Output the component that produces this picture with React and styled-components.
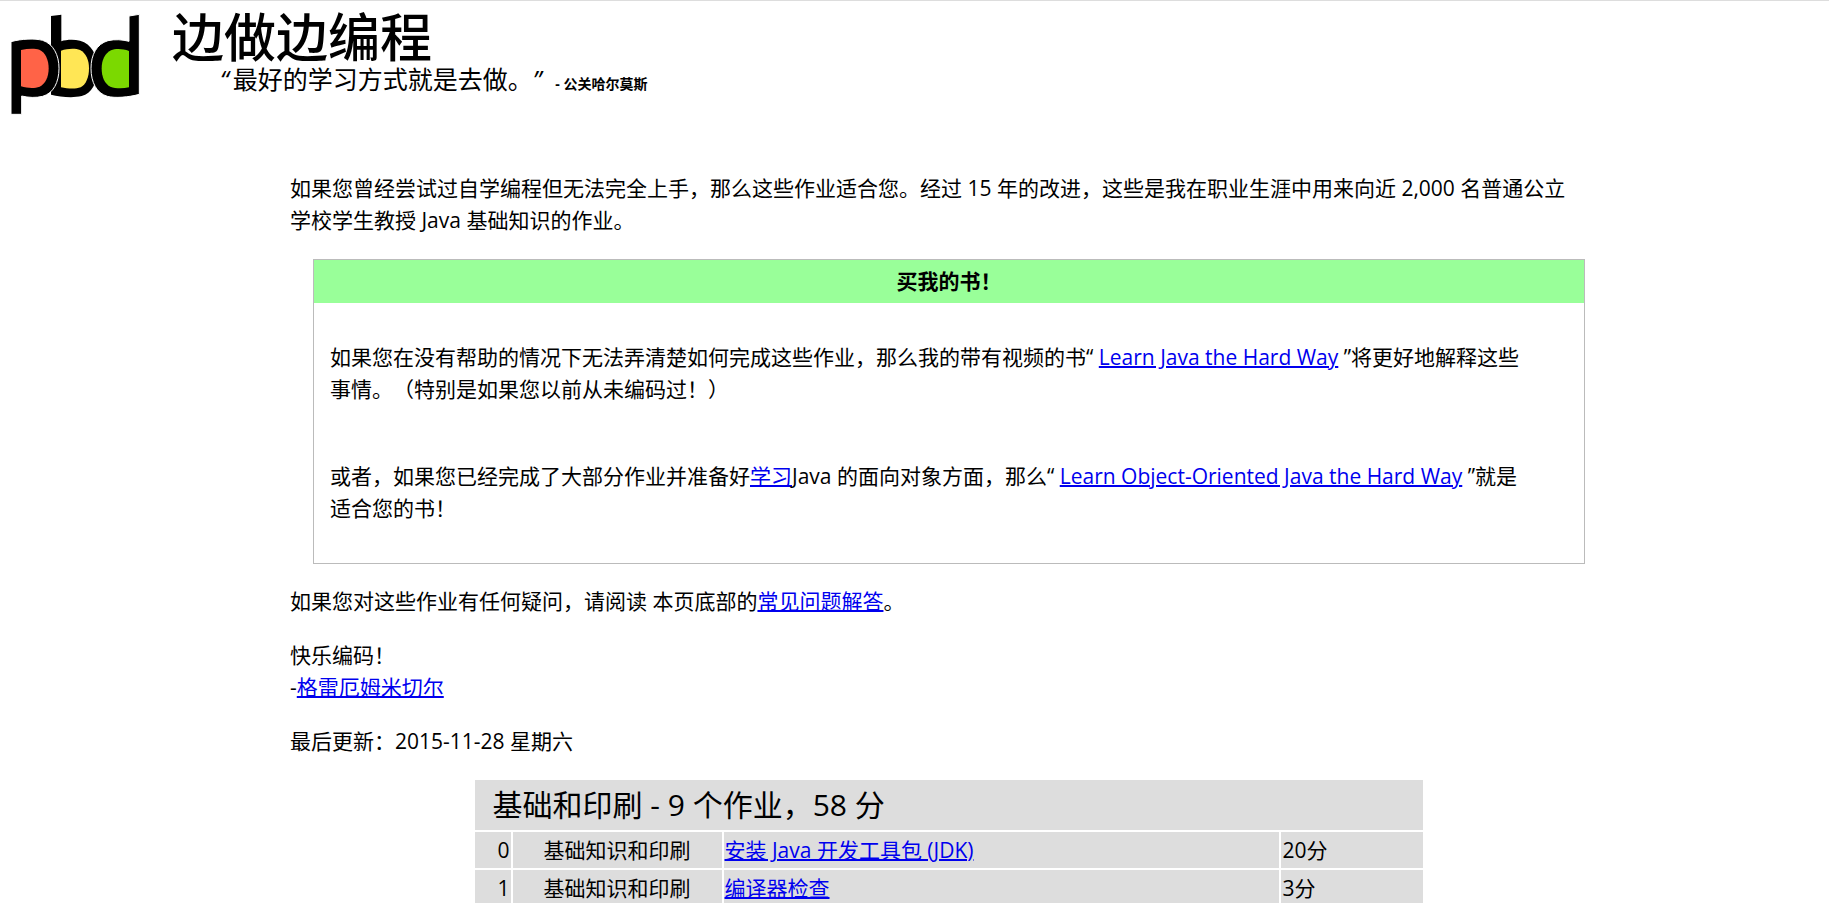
import React from "react";
import styled, { createGlobalStyle } from "styled-components";

const GlobalStyle = createGlobalStyle`
  body {
    margin: 0;
    background: #fff;
    color: #000;
    font-family: "Open Sans", "Noto Sans CJK SC", sans-serif;
    font-size: 21px;
    line-height: 32px;
    text-spacing-trim: space-all;
  }
`;

const Header = styled.header`
  display: flex;
  align-items: flex-start;
  gap: 32px;
  padding: 13px 10px 0;
  border-top: 1px solid #ddd;
`;

const Logo = styled.svg`
  flex: none;
  width: 130px;
  height: 101px;
`;

const Title = styled.h1`
  margin: 0;
  font-size: 52px;
  font-weight: 500;
  line-height: 46px;
`;

const Tagline = styled.p`
  display: flex;
  align-items: baseline;
  gap: 10px;
  margin: 0;
  padding-left: 48px;
  font-size: 25px;
  line-height: 38px;
`;

const Quote = styled.em`
  padding-right: 4px;
`;

const Author = styled.small`
  font-size: 14px;
  font-weight: 700;
`;

const Main = styled.main`
  padding: 57px 221px 0 290px;
`;

const Text = styled.p`
  margin: 0;
  padding-right: 30px;
`;

const Intro = styled(Text)`
  margin-bottom: 23px;
`;

const Notes = styled.div`
  display: flex;
  flex-direction: column;
  gap: 22px;
  margin-bottom: 23px;
`;

const Link = styled.a`
  color: #0000ee;
  text-decoration: underline;
  text-decoration-thickness: 2px;
`;

const BookBox = styled.section`
  margin: 0 23px 21px;
  border: 1px solid #bbb;
`;

const BookTitle = styled.h2`
  margin: 0;
  padding: 5px 16px 6px;
  background: #99ff99;
  font-size: 21px;
  line-height: 32px;
  text-align: center;
`;

const BookBody = styled.div`
  display: flex;
  flex-direction: column;
  gap: 55px;
  padding: 38px 56px 39px 16px;

  p {
    margin: 0;
  }
`;

const Assignments = styled.table`
  width: 72%;
  margin: -2px auto 0;
  border-collapse: separate;
  border-spacing: 0 2px;
  table-layout: fixed;
`;

const Caption = styled.th`
  height: 50px;
  padding: 0 18px;
  background: #ddd;
  font-size: 30px;
  font-weight: 400;
  text-align: left;
`;

const Cell = styled.td`
  height: 36px;
  padding: 0 1px;
  background: #ddd;
  background-clip: padding-box;
  border-right: ${(props) => (props.$last ? "0" : "2px solid transparent")};
  text-align: ${(props) => props.$align || "left"};
`;

const Col = styled.col`
  width: ${(props) => props.$width};
`;

const assignments = [
  { id: 0, name: "安装 Java 开发工具包 (JDK)", points: 20 },
  { id: 1, name: "编译器检查", points: 3 },
];

function PbdLogo() {
  return (
    <Logo viewBox="30 42 390 303" role="img" aria-label="pbd">
      <path d="M153 48 L184 44 V124 C197 119 222 118 240 122 C275 132 292 165 292 205 C292 250 275 281 245 288 C215 295 180 290 153 284 Z" />
      <path
        d="M183 152 C203 145 226 144 240 150 C258 159 267 180 267 205 C267 232 258 254 242 262 C226 268 203 266 183 262 Z"
        fill="#ffe655"
      />
      <path
        d="M33 125 C65 116 105 115 128 121 C160 132 177 165 177 205 C177 247 160 280 128 289 C108 294 85 293 65 288 V343 H33 Z"
        stroke="#fff"
        strokeWidth="3"
      />
      <path
        d="M63 150 C82 146 104 145 118 149 C136 157 146 179 146 205 C146 232 136 252 119 260 C102 266 82 264 63 259 Z"
        fill="#ff6347"
      />
      <path
        d="M387 48 L418 43 V283 C385 292 345 295 322 289 C290 280 273 247 273 205 C273 164 290 132 324 122 C345 117 368 119 387 124 Z"
        stroke="#fff"
        strokeWidth="3"
      />
      <path
        d="M387 153 C368 146 347 145 333 151 C315 160 305 180 305 205 C305 231 314 252 331 260 C347 266 368 266 387 262 Z"
        fill="#7bd900"
      />
    </Logo>
  );
}

export default function App() {
  return (
    <div lang="zh-CN">
      <GlobalStyle />
      <Header>
        <PbdLogo />
        <div>
          <Title>边做边编程</Title>
          <Tagline>
            <span>
              <Quote>“</Quote>最好的学习方式就是去做。<Quote>”</Quote>
            </span>
            <Author>- 公关哈尔莫斯</Author>
          </Tagline>
        </div>
      </Header>

      <Main>
        <Intro>
          如果您曾经尝试过自学编程但无法完全上手，那么这些作业适合您。经过 15
          年的改进，这些是我在职业生涯中用来向近 2,000 名普通公立学校学生教授 Java
          基础知识的作业。
        </Intro>

        <BookBox>
          <BookTitle>买我的书！</BookTitle>
          <BookBody>
            <p>
              如果您在没有帮助的情况下无法弄清楚如何完成这些作业，那么我的带有视频的书“{" "}
              <Link href="#ljthw">Learn Java the Hard Way</Link>{" "}
              ”将更好地解释这些事情。（特别是如果您以前从未编码过！）
            </p>
            <p>
              或者，如果您已经完成了大部分作业并准备好
              <Link href="#learn">学习</Link>Java 的面向对象方面，那么“{" "}
              <Link href="#loojthw">Learn Object-Oriented Java the Hard Way</Link>{" "}
              ”就是适合您的书！
            </p>
          </BookBody>
        </BookBox>

        <Notes>
          <Text>
            如果您对这些作业有任何疑问，请阅读 本页底部的
            <Link href="#faq">常见问题解答</Link>。
          </Text>
          <Text>
            快乐编码！
            <br />-<Link href="#author">格雷厄姆米切尔</Link>
          </Text>
          <Text>最后更新：2015-11-28 星期六</Text>
        </Notes>

        <Assignments>
          <colgroup>
            <Col $width="38px" />
            <Col $width="211px" />
            <Col />
            <Col $width="142px" />
          </colgroup>
          <thead>
            <tr>
              <Caption colSpan={4}>基础和印刷 - 9 个作业，58 分</Caption>
            </tr>
          </thead>
          <tbody>
            {assignments.map(({ id, name, points }) => (
              <tr key={id}>
                <Cell $align="right">{id}</Cell>
                <Cell $align="center">基础知识和印刷</Cell>
                <Cell>
                  <Link href={`#assignment-${id}`}>{name}</Link>
                </Cell>
                <Cell $last>{points}分</Cell>
              </tr>
            ))}
          </tbody>
        </Assignments>
      </Main>
    </div>
  );
}
